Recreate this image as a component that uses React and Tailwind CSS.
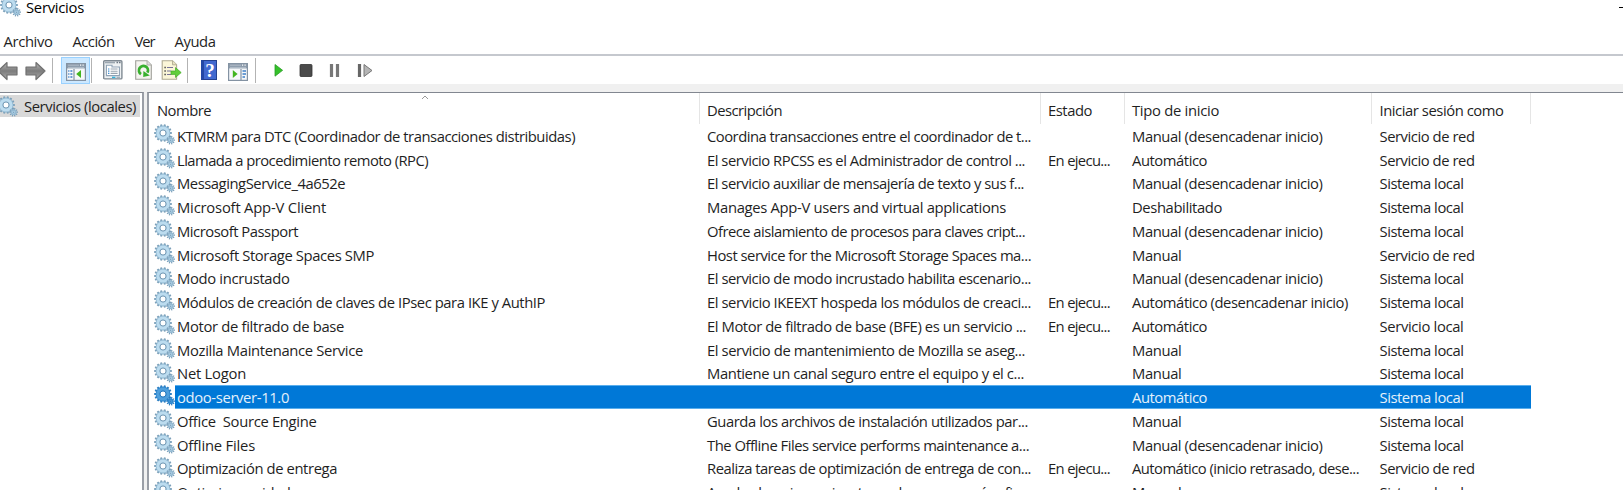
const A = 'Automático', M = 'Manual', MD = 'Manual (desencadenar inicio)', E = 'En ejecu...', SR = 'Servicio de red', SL = 'Sistema local';

// name, name width, description, description width, state, start type, account
const rows = [
  ['KTMRM para DTC (Coordinador de transacciones distribuidas)', 398, 'Coordina transacciones entre el coordinador de t...', 324, '', MD, SR],
  ['Llamada a procedimiento remoto (RPC)', 251, 'El servicio RPCSS es el Administrador de control ...', 318, E, A, SR],
  ['MessagingService_4a652e', 168, 'El servicio auxiliar de mensajería de texto y sus f...', 317, '', MD, SL],
  ['Microsoft App-V Client', 149, 'Manages App-V users and virtual applications', 299, '', 'Deshabilitado', SL],
  ['Microsoft Passport', 121, 'Ofrece aislamiento de procesos para claves cript...', 318, '', MD, SL],
  ['Microsoft Storage Spaces SMP', 197, 'Host service for the Microsoft Storage Spaces ma...', 324, '', M, SR],
  ['Modo incrustado', 112.5, 'El servicio de modo incrustado habilita escenario...', 324, '', MD, SL],
  ['Módulos de creación de claves de IPsec para IKE y AuthIP', 368, 'El servicio IKEEXT hospeda los módulos de creaci...', 324, E, 'Automático (desencadenar inicio)', SL],
  ['Motor de filtrado de base', 167, 'El Motor de filtrado de base (BFE) es un servicio ...', 319, E, A, 'Servicio local'],
  ['Mozilla Maintenance Service', 186, 'El servicio de mantenimiento de Mozilla se aseg...', 318, '', M, SL],
  ['Net Logon', 69, 'Mantiene un canal seguro entre el equipo y el c...', 317, '', M, SL],
  ['odoo-server-11.0', 112, '', 0, '', A, SL],
  ['Office  Source Engine', 139.5, 'Guarda los archivos de instalación utilizados par...', 321, '', M, SL],
  ['Offline Files', 78, 'The Offline Files service performs maintenance a...', 322, '', MD, SL],
  ['Optimización de entrega', 160, 'Realiza tareas de optimización de entrega de con...', 324, E, 'Automático (inicio retrasado, dese...', SR],
  ['Optimizar unidades', 128, 'Ayuda al equipo a ejecutarse de manera más efic...', 322, '', M, SL],
];

const widths = {
  [A]: 75, [M]: 49.5, [MD]: 190.5, [E]: 62, [SR]: 95, [SL]: 84, 'Servicio local': 84, Deshabilitado: 90,
  'Automático (desencadenar inicio)': 216, 'Automático (inicio retrasado, dese...': 227,
};

const canvas = document.createElement('canvas').getContext('2d');

function Fit({ children, w }) {
  canvas.font = '14.8px "Open Sans"';
  const target = w ?? widths[children];
  const ls = target ? (target - canvas.measureText(children).width) / children.length : -0.3;
  return <span className="whitespace-pre" style={{ letterSpacing: `${ls.toFixed(3)}px` }}>{children}</span>;
}

function teeth(cx, cy, r, n, len) {
  return Array.from({ length: n }, (_, i) => {
    const a = (i * 2 * Math.PI) / n;
    const c = Math.cos(a), s = Math.sin(a);
    return `M${cx + c * r} ${cy + s * r}L${cx + c * (r + len)} ${cy + s * (r + len)}`;
  }).join('');
}

function Gears({ selected }) {
  const dark = selected ? '#2a7cc0' : '#7a9fb9';
  const rim = selected ? '#2f88cf' : '#93b9d2';
  const light = selected ? '#4f9fdc' : '#bcdcef';
  return (
    <svg viewBox="0 0 21 21" className="h-[21px] w-[21px] shrink-0">
      <path d={teeth(9, 9, 6.5, 14, 2.3)} stroke={dark} strokeWidth="2" />
      <circle cx="9" cy="9" r="5.2" fill="none" stroke={rim} strokeWidth="4.4" />
      <circle cx="9" cy="9" r="5.1" fill="none" stroke={light} strokeWidth="3" />
      <circle cx="9" cy="9" r="3" fill="#fff" stroke={dark} strokeWidth="1" />
      <path d={teeth(16.6, 16.2, 2.6, 10, 1.8)} stroke={dark} strokeWidth="1.2" />
      <circle cx="16.6" cy="16.2" r="2.1" fill={light} stroke={rim} strokeWidth="1.6" />
      <circle cx="16.6" cy="16.2" r="0.8" fill={dark} />
    </svg>
  );
}

function Arrow({ flip }) {
  return (
    <svg viewBox="0 0 21 20" className={flip ? 'h-5 w-[21px] -scale-x-100' : 'h-5 w-[21px]'}>
      <defs>
        <linearGradient id="arrow" x1="0" y1="0" x2="0" y2="1">
          <stop offset="0" stopColor="#b5b5b5" /><stop offset=".5" stopColor="#7c7c7c" /><stop offset="1" stopColor="#aaa" />
        </linearGradient>
      </defs>
      <path d="M1 6.2H11V1.5L20 10L11 18.5V13.8H1Z" fill="url(#arrow)" stroke="#707070" strokeWidth="1.2" strokeLinejoin="round" />
    </svg>
  );
}

function Panel({ play }) {
  return (
    <svg viewBox="0 0 20 18" className="h-[18px] w-5">
      <rect x=".6" y=".6" width="18.8" height="16.8" fill="#f6f8fa" stroke="#8493a3" strokeWidth="1.2" />
      <path d="M1 1H19V5.4H1Z" fill="#8b9aaa" />
      <path d="M2 2.2H13M2 4.4H18" stroke="#c3ccd5" strokeWidth=".7" />
      <path d="M14 2.2h1.2M16.5 2.2h1.2" stroke="#fff" strokeWidth="1.2" />
      {play ? (
        <>
          <path d="M13 6V17" stroke="#8493a3" strokeWidth="1.2" />
          <path d="M14.5 8H18M14.5 11H18M14.5 14H17" stroke="#3f7fc8" strokeWidth="1.3" />
          <path d="M4.8 7L9.6 11L4.8 15Z" fill="#42b51f" />
        </>
      ) : (
        <>
          <path d="M8 6V17" stroke="#8493a3" strokeWidth="1.2" />
          <path d="M2.2 8H3.4M4.4 8H6.4M2.2 11H3.4M4.4 11H6.4M2.2 14H3.4M4.4 14H6.4" stroke="#3f7fc8" strokeWidth="1.3" />
          <path d="M15 7L10.2 11L15 15Z" fill="#42b51f" />
        </>
      )}
    </svg>
  );
}

function Properties() {
  return (
    <svg viewBox="0 0 20 20" className="h-5 w-5">
      <rect x=".7" y=".7" width="18.2" height="18.2" rx="1" fill="#eef1f3" stroke="#808a93" strokeWidth="1.4" />
      <path d="M2 2.6H12" stroke="#9ba6b0" strokeWidth="1.5" />
      <path d="M13.5 2.6h1.6M16 2.6h1.6" stroke="#6d7883" strokeWidth="1.5" />
      <path d="M3.4 5.2H9V7H16.4V15.6H3.4Z" fill="#fff" stroke="#8fa2b5" strokeWidth="1.1" />
      <path d="M5 9H6.4M5 11.2H6.4M5 13.4H6.4" stroke="#3d8cd0" strokeWidth="1.2" />
      <path d="M7.6 9H14.6M7.6 11.2H14.6M7.6 13.4H14.6" stroke="#98a4af" strokeWidth="1.1" />
      <path d="M9 17.4H12.4" stroke="#2fb2dd" strokeWidth="1.4" /><path d="M13.6 17.4H17" stroke="#a6b1bb" strokeWidth="1.4" />
    </svg>
  );
}

function Refresh() {
  return (
    <svg viewBox="0 0 17 20" className="h-5 w-[17px]">
      <path d="M.7 .7H12L16.3 5V19.3H.7Z" fill="#f5f4ef" stroke="#a0a09a" strokeWidth="1.1" />
      <path d="M12 .7V5H16.3" fill="#ddd" stroke="#a9a9a3" strokeWidth=".9" />
      <path d="M6 14.2A4.5 4.5 0 1 1 12.4 12.6" fill="none" stroke="#38b02e" strokeWidth="2.8" />
      <path d="M8.4 11L14.8 15.6L8.2 17Z" fill="#38b02e" />
    </svg>
  );
}

function Export() {
  return (
    <svg viewBox="0 0 21 20" className="h-5 w-[21px]">
      <path d="M1.2 .7H11.5L15.6 4.8V19.3H1.2Z" fill="#fbf6d8" stroke="#b0ab93" strokeWidth="1.1" />
      <path d="M11.5 .7V4.8H15.6" fill="#e8e2c0" stroke="#b0ab93" strokeWidth=".9" />
      <path d="M3.4 7.5H4.8M3.4 11H4.8M3.4 14.5H4.8" stroke="#444" strokeWidth="1.3" />
      <path d="M6 7.5H12M6 11H10M6 14.5H10" stroke="#77739a" strokeWidth="1.2" />
      <path d="M10 11H14.5V7.6L20.2 12.6L14.5 17.4V14.4H10Z" fill="#62ce3b" stroke="#45aa27" strokeWidth=".7" />
    </svg>
  );
}

function Help() {
  return (
    <div className="flex h-5 w-4 items-center justify-center border border-[#24418f] border-l-[3px] border-l-[#2348a5] bg-[#4169cf] font-['Liberation_Serif',serif] text-[19px] leading-none font-bold text-white">?</div>
  );
}

function Sep({ className }) {
  return <div className={`h-[25px] w-px shrink-0 bg-[#b3b3b3] ${className}`} />;
}

const grid = 'grid grid-cols-[551px_341px_84px_247px_159px]';

export default function App() {
  return (
    <div className="flex h-[490px] w-[1623px] flex-col overflow-hidden bg-white font-['Open_Sans',sans-serif] text-[14.8px] leading-[20px] text-[#1f1f1f]">
      <header className="flex h-[27px] shrink-0 items-start justify-between">
        <div className="flex items-start text-black">
          <div className="-mt-1"><Gears /></div>
          <div className="-mt-[3px] ml-[5px]"><Fit w={58}>Servicios</Fit></div>
        </div>
        <div className="mt-[7px] h-px w-1 bg-black" />
      </header>
      <nav className="flex h-[27px] shrink-0 pt-1 pl-[3.5px]">
        <div className="w-[69px]"><Fit w={49}>Archivo</Fit></div>
        <div className="w-[62px]"><Fit w={42}>Acción</Fit></div>
        <div className="w-[40px]"><Fit w={20}>Ver</Fit></div>
        <div><Fit w={41}>Ayuda</Fit></div>
      </nav>
      <div className="flex h-[30px] shrink-0 items-center border-t-2 border-[#c5c8ce] bg-white">
        <div className="-ml-[3px] pt-px"><Arrow flip /></div>
        <div className="ml-[7px] pt-px"><Arrow /></div>
        <Sep className="ml-[6px]" />
        <div className="ml-2 flex h-[27px] w-[29px] items-center justify-center border border-[#99d1ff] bg-[#cce8ff] pt-1"><Panel /></div>
        <Sep className="ml-px" />
        <div className="ml-[11px]"><Properties /></div>
        <div className="ml-[12px]"><Refresh /></div>
        <div className="ml-[9px]"><Export /></div>
        <Sep className="ml-[5px]" />
        <div className="ml-[13px]"><Help /></div>
        <div className="ml-[11px] pt-1"><Panel play /></div>
        <Sep className="ml-[7px]" />
        <svg viewBox="0 0 100 20" className="ml-[18px] h-5 w-[100px]">
          <path d="M1 4.5L8.6 10.3L1 16.2Z" fill="#35c12a" stroke="#2a9c26" strokeWidth=".8" />
          <rect x="26" y="4.5" width="12" height="12" rx="1" fill="#4b4b4b" stroke="#333" strokeWidth=".8" />
          <path d="M57.5 4V17M63.5 4V17" stroke="#777" strokeWidth="3.2" />
          <path d="M85.5 4V17" stroke="#666" strokeWidth="3.2" />
          <path d="M90 4.5L98 10.5L90 16.5Z" fill="#b5b5b5" stroke="#777" />
        </svg>
      </div>
      <main className="flex min-h-0 flex-1 bg-[#f0f0f0] pt-2">
        <aside className="w-[144px] shrink-0 border-t border-r-2 border-t-[#828790] border-r-[#9a9ea6] bg-white pt-[2px]">
          <div className="flex h-[22px] w-[140px] items-center bg-[#d9d9d9]">
            <div className="-ml-[3px]"><Gears /></div>
            <div className="ml-[6px]"><Fit w={112}>Servicios (locales)</Fit></div>
          </div>
        </aside>
        <section className="ml-[3px] min-w-0 flex-1 overflow-hidden border-t border-l-2 border-t-[#828790] border-l-[#9a9ea6] bg-white">
          <div className={`${grid} h-[31px] items-stretch`}>
            <div className="relative border-r border-[#e5e5e5] pt-[7px] pl-2">
              <Fit w={54}>Nombre</Fit>
              <svg viewBox="0 0 8 5" className="absolute top-[2px] left-[272px] h-[5px] w-2"><path d="M1 4L4 1L7 4" fill="none" stroke="#999" /></svg>
            </div>
            <div className="border-r border-[#e5e5e5] pt-[7px] pl-[7px]"><Fit w={75}>Descripción</Fit></div>
            <div className="border-r border-[#e5e5e5] pt-[7px] pl-[7px]"><Fit w={44}>Estado</Fit></div>
            <div className="border-r border-[#e5e5e5] pt-[7px] pl-[7px]"><Fit w={87}>Tipo de inicio</Fit></div>
            <div className="border-r border-[#e5e5e5] pt-[7px] pl-[7.5px]"><Fit w={124}>Iniciar sesión como</Fit></div>
          </div>
          {rows.map(([name, nw, desc, dw, state, type, account]) => {
            const selected = name.startsWith('odoo');
            const cell = selected ? 'flex items-center border-y border-[#5aaeec] bg-[#0078d7] text-[#e4f1fb]' : 'flex items-center';
            return (
              <div key={name} className={`${grid} h-[23.75px]`}>
                <div className="flex pl-[5px]">
                  <Gears selected={selected} />
                  <div className={`${cell} flex-1 pl-[2px]`}><Fit w={nw}>{name}</Fit></div>
                </div>
                <div className={`${cell} pl-[7px]`}>{desc && <Fit w={dw}>{desc}</Fit>}</div>
                <div className={`${cell} pl-[7px]`}>{state && <Fit>{state}</Fit>}</div>
                <div className={`${cell} pl-[7px]`}><Fit>{type}</Fit></div>
                <div className={`${cell} pl-[7.5px]`}><Fit>{account}</Fit></div>
              </div>
            );
          })}
        </section>
      </main>
    </div>
  );
}
